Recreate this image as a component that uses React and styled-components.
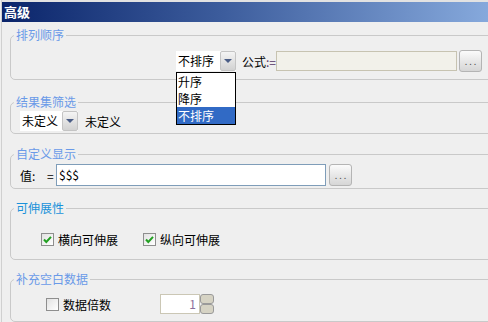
import React from 'react';
import styled, { createGlobalStyle } from 'styled-components';

const GlobalStyle = createGlobalStyle`
  html, body {
    margin: 0;
    padding: 0;
    background: #efefef;
    overflow: hidden;
  }
  body {
    font-family: "Noto Sans CJK SC", "Liberation Sans", sans-serif;
    font-size: 12px;
    color: #000;
  }
`;

const Window = styled.div`
  width: 488px;
  height: 322px;
  overflow: hidden;
  background: #efefef;
  box-sizing: border-box;
  border-left: 1px solid #d0d0d0;
  margin-left: 1px;
`;

const TitleBar = styled.div`
  height: 20px;
  border-top: 2px solid #e2e2e2;
  margin-left: -2px;
  background: linear-gradient(to right, #0a246a, #3c5c9c 45%, #86a9dc);
  color: #fff;
  font-weight: bold;
  font-size: 13px;
  line-height: 19px;
  padding-left: 4px;
`;

const Group = styled.fieldset`
  margin: ${p => p.$top}px 0 0 8px;
  width: 520px;
  box-sizing: border-box;
  border: 1px solid #c9c9c9;
  border-radius: 5px;
  padding: ${p => p.$pt}px 0 ${p => p.$pb}px 0;
  min-width: 0;
`;

const Legend = styled.legend`
  margin-left: 3px;
  padding: 0 2px;
  font-size: 12px;
  line-height: 14px;
  color: ${p => p.$color || '#6a9ae8'};
`;

const Row = styled.div`
  display: flex;
  align-items: center;
  height: ${p => p.$h || 20}px;
  padding-left: ${p => p.$pl}px;
`;

const ComboWrap = styled.div`
  position: relative;
  display: flex;
  width: ${p => p.$w}px;
  height: 20px;
  background: #fff;
  box-sizing: border-box;
`;

const ComboText = styled.div`
  flex: 1;
  line-height: 20px;
  padding-left: 2px;
  white-space: nowrap;
`;

const ComboArrow = styled.div`
  width: 16px;
  height: 20px;
  box-sizing: border-box;
  border: 1px solid #c4c4c4;
  border-radius: 2px;
  background: linear-gradient(#f4f4f4, #d2d2d2);
  display: flex;
  align-items: center;
  justify-content: center;
  &::after {
    content: '';
    border-left: 4px solid transparent;
    border-right: 4px solid transparent;
    border-top: 4px solid #4a5d86;
  }
`;

const DropList = styled.ul`
  position: absolute;
  top: 21px;
  left: 0;
  width: 60px;
  margin: 0;
  padding: 0;
  list-style: none;
  background: #fff;
  border: 1px solid #000;
  box-sizing: border-box;
  z-index: 5;
`;

const DropItem = styled.li`
  height: 17px;
  line-height: 17px;
  padding-left: 1px;
  background: ${p => (p.$active ? '#316ac5' : '#fff')};
  color: ${p => (p.$active ? '#fff' : '#000')};
`;

const Label = styled.span`
  white-space: nowrap;
  margin-left: ${p => p.$ml || 0}px;
  width: ${p => (p.$w ? `${p.$w}px` : 'auto')};
  flex: none;
`;

const Assign = styled.span`
  color: #553366;
`;

const TextBox = styled.div`
  width: ${p => p.$w}px;
  height: ${p => p.$h}px;
  box-sizing: border-box;
  border: 1px solid ${p => (p.$disabled ? '#c7c3b1' : '#7f9db9')};
  background: ${p => (p.$disabled ? '#f2f1ea' : '#fff')};
  line-height: ${p => p.$h - 2}px;
  padding-left: 2px;
  flex: none;
`;

const DotButton = styled.div`
  width: 23px;
  height: 22px;
  margin-left: ${p => p.$ml}px;
  box-sizing: border-box;
  border: 1px solid #b4b4b4;
  border-radius: 3px;
  background: linear-gradient(#fbfbfb, #e6e6e6 55%, #d6d6d6);
  font-size: 9px;
  letter-spacing: 2px;
  color: #555;
  text-align: center;
  line-height: 22px;
  padding-left: 2px;
  flex: none;
`;

const Check = styled.span`
  width: 13px;
  height: 13px;
  box-sizing: border-box;
  border: 1px solid #8e8e8e;
  background: linear-gradient(135deg, #e2e2e2, #fff);
  margin-left: ${p => p.$ml}px;
  margin-right: 4px;
  display: inline-flex;
  align-items: center;
  justify-content: center;
  flex: none;
`;

const SpinBox = styled.div`
  display: flex;
  margin-left: ${p => p.$ml}px;
  height: 20px;
`;

const SpinInput = styled.div`
  width: 40px;
  height: 20px;
  box-sizing: border-box;
  border: 1px solid #cbc7b5;
  background: #fff;
  text-align: right;
  padding-right: 3px;
  color: #8a6f9c;
  line-height: 18px;
`;

const SpinButtons = styled.div`
  display: flex;
  flex-direction: column;
  width: 14px;
`;

const SpinHalf = styled.div`
  flex: 1;
  box-sizing: border-box;
  border: 1px solid #9a9a9a;
  border-radius: 3px;
  background: #d6d3c4;
`;

const CheckMark = () => (
  <svg width="11" height="11" viewBox="0 0 11 11">
    <path d="M2 5.5 L4.3 8 L9 2.8" stroke="#22a022" strokeWidth="2" fill="none" />
  </svg>
);

const App = () => (
  <Window>
    <GlobalStyle />
    <TitleBar>高级</TitleBar>

    <Group $top={6} $pt={9} $pb={8}>
      <Legend>排列顺序</Legend>
      <Row $pl={165}>
        <ComboWrap $w={60}>
          <ComboText>不排序</ComboText>
          <ComboArrow />
          <DropList>
            <DropItem>升序</DropItem>
            <DropItem>降序</DropItem>
            <DropItem $active>不排序</DropItem>
          </DropList>
        </ComboWrap>
        <Label $ml={6}>
          公式<Assign>:=</Assign>
        </Label>
        <TextBox $w={181} $h={20} $disabled />
        <DotButton $ml={2}>...</DotButton>
      </Row>
    </Group>

    <Group $top={15} $pt={2} $pb={2}>
      <Legend>结果集筛选</Legend>
      <Row $pl={9}>
        <ComboWrap $w={58}>
          <ComboText>未定义</ComboText>
          <ComboArrow />
        </ComboWrap>
        <Label $ml={7}>未定义</Label>
      </Row>
    </Group>

    <Group $top={13} $pt={3} $pb={2}>
      <Legend>自定义显示</Legend>
      <Row $pl={9} $h={22}>
        <Label $w={27}>值:</Label>
        <Label $w={9}>=</Label>
        <TextBox $w={270} $h={22}>$$$</TextBox>
        <DotButton $ml={3}>...</DotButton>
      </Row>
    </Group>

    <Group $top={12} $pt={16} $pb={12}>
      <Legend $color="#1a92da">可伸展性</Legend>
      <Row $pl={30} $h={16}>
        <Check $ml={0}>
          <CheckMark />
        </Check>
        <Label>横向可伸展</Label>
        <Check $ml={25}>
          <CheckMark />
        </Check>
        <Label>纵向可伸展</Label>
      </Row>
    </Group>

    <Group $top={12} $pt={8} $pb={7}>
      <Legend>补充空白数据</Legend>
      <Row $pl={35}>
        <Check $ml={0} />
        <Label>数据倍数</Label>
        <SpinBox $ml={49}>
          <SpinInput>1</SpinInput>
          <SpinButtons>
            <SpinHalf />
            <SpinHalf />
          </SpinButtons>
        </SpinBox>
      </Row>
    </Group>
  </Window>
);

export default App;
